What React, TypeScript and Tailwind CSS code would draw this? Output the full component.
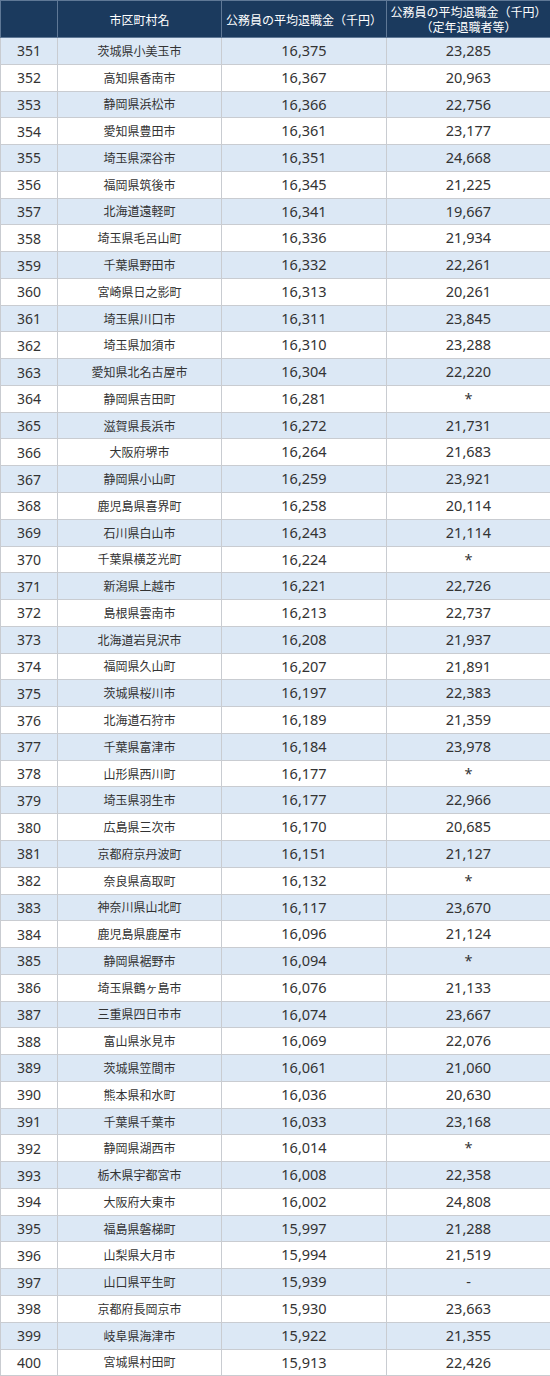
import React from 'react';

type Row = [number, string, string, string];

const rows: Row[] = [
  [351, '茨城県小美玉市', '16,375', '23,285'],
  [352, '高知県香南市', '16,367', '20,963'],
  [353, '静岡県浜松市', '16,366', '22,756'],
  [354, '愛知県豊田市', '16,361', '23,177'],
  [355, '埼玉県深谷市', '16,351', '24,668'],
  [356, '福岡県筑後市', '16,345', '21,225'],
  [357, '北海道遠軽町', '16,341', '19,667'],
  [358, '埼玉県毛呂山町', '16,336', '21,934'],
  [359, '千葉県野田市', '16,332', '22,261'],
  [360, '宮崎県日之影町', '16,313', '20,261'],
  [361, '埼玉県川口市', '16,311', '23,845'],
  [362, '埼玉県加須市', '16,310', '23,288'],
  [363, '愛知県北名古屋市', '16,304', '22,220'],
  [364, '静岡県吉田町', '16,281', '*'],
  [365, '滋賀県長浜市', '16,272', '21,731'],
  [366, '大阪府堺市', '16,264', '21,683'],
  [367, '静岡県小山町', '16,259', '23,921'],
  [368, '鹿児島県喜界町', '16,258', '20,114'],
  [369, '石川県白山市', '16,243', '21,114'],
  [370, '千葉県横芝光町', '16,224', '*'],
  [371, '新潟県上越市', '16,221', '22,726'],
  [372, '島根県雲南市', '16,213', '22,737'],
  [373, '北海道岩見沢市', '16,208', '21,937'],
  [374, '福岡県久山町', '16,207', '21,891'],
  [375, '茨城県桜川市', '16,197', '22,383'],
  [376, '北海道石狩市', '16,189', '21,359'],
  [377, '千葉県富津市', '16,184', '23,978'],
  [378, '山形県西川町', '16,177', '*'],
  [379, '埼玉県羽生市', '16,177', '22,966'],
  [380, '広島県三次市', '16,170', '20,685'],
  [381, '京都府京丹波町', '16,151', '21,127'],
  [382, '奈良県高取町', '16,132', '*'],
  [383, '神奈川県山北町', '16,117', '23,670'],
  [384, '鹿児島県鹿屋市', '16,096', '21,124'],
  [385, '静岡県裾野市', '16,094', '*'],
  [386, '埼玉県鶴ヶ島市', '16,076', '21,133'],
  [387, '三重県四日市市', '16,074', '23,667'],
  [388, '富山県氷見市', '16,069', '22,076'],
  [389, '茨城県笠間市', '16,061', '21,060'],
  [390, '熊本県和水町', '16,036', '20,630'],
  [391, '千葉県千葉市', '16,033', '23,168'],
  [392, '静岡県湖西市', '16,014', '*'],
  [393, '栃木県宇都宮市', '16,008', '22,358'],
  [394, '大阪府大東市', '16,002', '24,808'],
  [395, '福島県磐梯町', '15,997', '21,288'],
  [396, '山梨県大月市', '15,994', '21,519'],
  [397, '山口県平生町', '15,939', '-'],
  [398, '京都府長岡京市', '15,930', '23,663'],
  [399, '岐阜県海津市', '15,922', '21,355'],
  [400, '宮城県村田町', '15,913', '22,426'],
];

const cell = 'border border-[#c9ccd1] text-center align-middle p-0';
const head = 'border border-[#5f7896] font-normal p-0 whitespace-nowrap';

const App: React.FC = () => {
  return (
    <div className="w-[550px] bg-white text-[#333] font-['Noto_Sans','Noto_Sans_CJK_JP',sans-serif]">
      <table className="w-[550px] table-fixed border-collapse">
        <colgroup>
          <col className="w-[57px]" />
          <col className="w-[164px]" />
          <col className="w-[165px]" />
          <col className="w-[164px]" />
        </colgroup>
        <thead>
          <tr className="h-[37px] bg-[#1b3a5e] text-white text-[12px] leading-[15px] font-['Noto_Sans_CJK_JP',sans-serif]">
            <th className={head}></th>
            <th className={head}>市区町村名</th>
            <th className={head}>公務員の平均退職金（千円）</th>
            <th className={head}>
              公務員の平均退職金（千円）
              <br />
              （定年退職者等）
            </th>
          </tr>
        </thead>
        <tbody>
          {rows.map(([rank, name, avg, retire], i) => (
            <tr key={rank} className={`h-[26.78px] ${i % 2 === 0 ? 'bg-[#dce8f5]' : 'bg-white'}`}>
              <td className={`${cell} text-[14px]`}>{rank}</td>
              <td className={`${cell} text-[12px] font-['Noto_Sans_CJK_JP',sans-serif]`}>{name}</td>
              <td className={`${cell} text-[14.5px]`}>{avg}</td>
              <td className={`${cell} text-[14.5px]`}>{retire}</td>
            </tr>
          ))}
        </tbody>
      </table>
    </div>
  );
};

export default App;
